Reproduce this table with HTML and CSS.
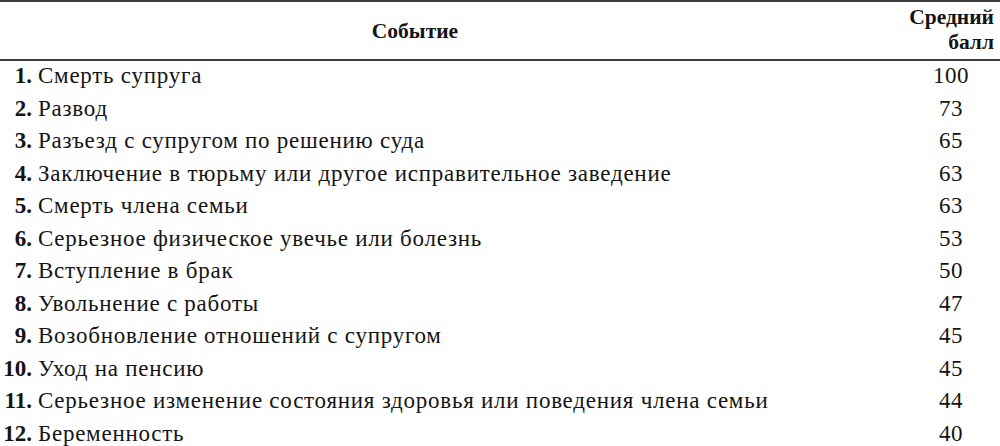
FILE: index.html
```html
<!DOCTYPE html>
<html lang="ru">
<head>
<meta charset="utf-8">
<link rel="stylesheet" href="styles.css">
</head>
<body>
<div class="table">
  <div class="head">
    <div class="h-event">Событие</div>
    <div class="h-score">Средний<br>балл</div>
  </div>
  <div class="body">
    <div class="row"><div class="ev"><span class="n">1.</span><span class="t">Смерть супруга</span></div><div class="sc">100</div></div>
    <div class="row"><div class="ev"><span class="n">2.</span><span class="t">Развод</span></div><div class="sc">73</div></div>
    <div class="row"><div class="ev"><span class="n">3.</span><span class="t">Разъезд с супругом по решению суда</span></div><div class="sc">65</div></div>
    <div class="row"><div class="ev"><span class="n">4.</span><span class="t">Заключение в тюрьму или другое исправительное заведение</span></div><div class="sc">63</div></div>
    <div class="row"><div class="ev"><span class="n">5.</span><span class="t">Смерть члена семьи</span></div><div class="sc">63</div></div>
    <div class="row"><div class="ev"><span class="n">6.</span><span class="t">Серьезное физическое увечье или болезнь</span></div><div class="sc">53</div></div>
    <div class="row"><div class="ev"><span class="n">7.</span><span class="t">Вступление в брак</span></div><div class="sc">50</div></div>
    <div class="row"><div class="ev"><span class="n">8.</span><span class="t">Увольнение с работы</span></div><div class="sc">47</div></div>
    <div class="row"><div class="ev"><span class="n">9.</span><span class="t">Возобновление отношений с супругом</span></div><div class="sc">45</div></div>
    <div class="row"><div class="ev"><span class="n">10.</span><span class="t">Уход на пенсию</span></div><div class="sc">45</div></div>
    <div class="row"><div class="ev"><span class="n">11.</span><span class="t">Серьезное изменение состояния здоровья или поведения члена семьи</span></div><div class="sc">44</div></div>
    <div class="row"><div class="ev"><span class="n">12.</span><span class="t">Беременность</span></div><div class="sc">40</div></div>
  </div>
</div>
</body>
</html>
```
FILE: styles.css
```css
html, body {
  margin: 0;
  padding: 0;
  background: #fff;
}
body {
  font-family: "Liberation Serif", "Times New Roman", serif;
  color: #141414;
  font-size: 23px;
  width: 1000px;
  height: 446px;
  overflow: hidden;
}
.table {
  width: 1000px;
}
.head {
  display: grid;
  grid-template-columns: 830px 170px;
  border-top: 2px solid #3c3c3c;
  border-bottom: 2px solid #3c3c3c;
  height: 57px;
  font-weight: bold;
  font-size: 21.5px;
  line-height: 25px;
}
.h-event {
  align-self: center;
  text-align: center;
  padding-top: 2px;
}
.h-score {
  text-align: right;
  padding-right: 6px;
  padding-top: 3px;
}
.body {
  display: flex;
  flex-direction: column;
}
.row {
  display: grid;
  grid-template-columns: 830px 170px;
  height: 32.5px;
  line-height: 29px;
}
.ev {
  display: flex;
  white-space: nowrap;
}
.n {
  width: 32px;
  text-align: right;
  font-weight: bold;
  flex: none;
}
.t {
  margin-left: 6px;
  letter-spacing: 0.75px;
}
.sc {
  text-align: center;
  padding-left: 78px;
  padding-right: 6px;
  letter-spacing: 0.5px;
}
```
